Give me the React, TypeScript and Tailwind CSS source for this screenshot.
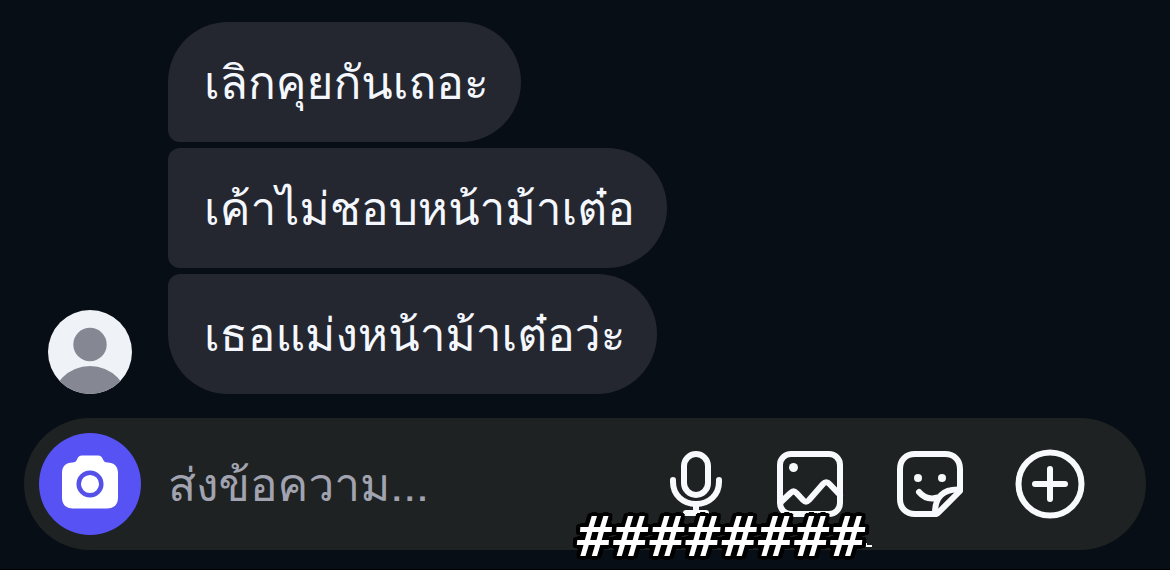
import type { ReactNode } from "react";

const MESSAGES = [
  { id: 1, text: "เลิกคุยกันเถอะ", corners: "rounded-[60px] rounded-bl-xl" },
  { id: 2, text: "เค้าไม่ชอบหน้าม้าเต๋อ", corners: "rounded-r-[60px] rounded-l-xl" },
  { id: 3, text: "เธอแม่งหน้าม้าเต๋อว่ะ", corners: "rounded-[60px] rounded-tl-xl" },
];

function Avatar() {
  return (
    <svg viewBox="0 0 84 84" className="size-[84px] shrink-0 rounded-full" role="img" aria-label="Profile">
      <rect width="84" height="84" fill="#eff3f7" />
      <circle cx="42" cy="34.5" r="16.7" fill="#858893" />
      <circle cx="42" cy="95" r="39" fill="#858893" />
    </svg>
  );
}

function CameraIcon() {
  return (
    <svg viewBox="0 0 56 54" className="w-14 h-[54px]" aria-hidden>
      <path
        d="M20 0.500h16c2.500 0 4 1.500 5 4 .8 2 2 3 4.500 3 6.500 0 10.500 4 10.500 10.500v24.500c0 7-4 11-11 11H11c-7 0-11-4-11-11V18c0-6.500 4-10.500 10.500-10.500 2.500 0 3.700-1 4.500-3 1-2.500 2.500-4 5-4z"
        fill="#fff"
      />
      <circle cx="28" cy="29" r="11.300" fill="#fff" stroke="#5551e8" strokeWidth="4.500" />
    </svg>
  );
}

function IconButton({ label, children }: { label: string; children: ReactNode }) {
  return (
    <button type="button" aria-label={label} className="size-[72px] shrink-0">
      <svg
        viewBox="0 0 72 72"
        className="size-[72px]"
        fill="none"
        stroke="#f7f9fc"
        strokeWidth="6"
        strokeLinecap="round"
        strokeLinejoin="round"
        aria-hidden
      >
        {children}
      </svg>
    </button>
  );
}

function Composer() {
  return (
    <form className="relative mx-6 mt-6 flex h-[132px] items-center rounded-full bg-[#1e2222] pl-[15px] pr-[60px]">
      <button
        type="button"
        aria-label="กล้อง"
        className="flex size-[102px] shrink-0 items-center justify-center rounded-full bg-[#5652f4] pb-1"
      >
        <CameraIcon />
      </button>
      <input
        type="text"
        aria-label="ส่งข้อความ"
        placeholder="ส่งข้อความ..."
        className="ml-[27px] h-20 min-w-0 flex-1 bg-transparent text-[46px] text-[#f4f7fd] outline-none placeholder:text-[#a1a3b0]"
      />
      <div className="flex gap-12">
        <IconButton label="ข้อความเสียง">
          <rect x="30" y="6" width="24" height="41" rx="12" />
          <path d="M19 32v2c0 13 10 22 23 22s23-9 23-22v-2M42 56v8M32 65h20" />
        </IconButton>
        <IconButton label="รูปภาพ">
          <rect x="6" y="6" width="60" height="60" rx="11" />
          <circle cx="19.500" cy="19.500" r="4.500" fill="#f7f9fc" stroke="none" />
          <path d="M7 54l9.500-9c2-2 4-2 6 0l6.500 7c2 2 4 2 6 0L49 36c2-2.200 4.500-2.200 6.500 0L66 47" />
        </IconButton>
        <IconButton label="สติกเกอร์">
          <path d="M42 66H21C12 66 6 60 6 51V21C6 12 12 6 21 6h30c9 0 15 6 15 15v22L44 65z" />
          <path d="M65 41.500C49 41 41 49 41 65M25 44c5 6 12 7.500 19 5.500" />
          <circle cx="24" cy="30" r="4" fill="#f7f9fc" stroke="none" />
          <circle cx="48" cy="30" r="4" fill="#f7f9fc" stroke="none" />
        </IconButton>
        <IconButton label="เพิ่มเติม">
          <circle cx="36" cy="36" r="31.500" />
          <path d="M36 21v30M21 36h30" />
        </IconButton>
      </div>
      {/* loose ends showing past the caption's outline */}
      <svg viewBox="0 0 10 30" className="pointer-events-none absolute -bottom-1 right-[273px] h-[30px] w-[10px]" fill="#fff" aria-hidden>
        <path d="M1 0h2v2H1zM2 19h2v3H2zM2 21h7v2H2z" />
      </svg>
      {/* caption stamped over the lower edge of the bar */}
      <p className="pointer-events-none absolute -bottom-3 right-[281px] whitespace-nowrap font-['Noto_Sans'] text-[56px] leading-[56px] font-semibold italic text-white [text-shadow:4px_0_#000,-4px_0_#000,0_4px_#000,0_-4px_#000,3px_3px_#000,-3px_3px_#000,3px_-3px_#000,-3px_-3px_#000,4px_2px_#000,-4px_2px_#000,4px_-2px_#000,-4px_-2px_#000]">
        ########
      </p>
    </form>
  );
}

export default function App() {
  return (
    <main className="min-h-screen border-b border-black bg-[#080e16] pt-[22px] font-['Loma','FreeSans','Liberation_Sans',sans-serif]">
      <div className="flex items-end gap-9 pl-12 pr-6">
        <Avatar />
        <ul className="flex flex-col items-start gap-[6px]">
          {MESSAGES.map((m) => (
            <li
              key={m.id}
              className={`flex h-[120px] items-center bg-[#24272f] pl-9 pr-8 text-[46px] whitespace-nowrap text-[#f4f7fd] ${m.corners}`}
            >
              {m.text}
            </li>
          ))}
        </ul>
      </div>
      <Composer />
    </main>
  );
}
